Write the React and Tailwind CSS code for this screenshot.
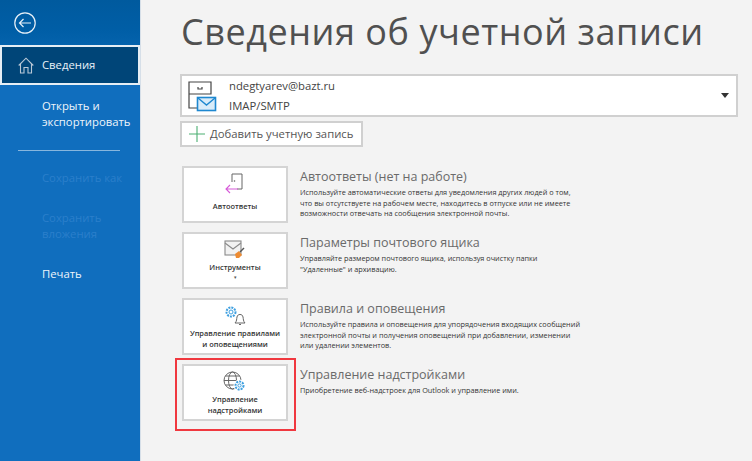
function Card({ label, children, title, desc, boxed, chevron, low }) {
  const card = (
    <div className="w-[106px] h-[57px] shrink-0 bg-white border-2 border-[#d4d4d4] flex flex-col items-center pt-[4px]">
      <div className="h-[24px] flex items-center justify-center shrink-0">{children}</div>
      <div className={`text-[7.4px] leading-[11px] font-semibold text-[#333] text-center whitespace-nowrap ${low ? "mt-[5px]" : ""}`}>{label}</div>
      {chevron && <div className="text-[5px] leading-[8px] text-[#555]">▾</div>}
    </div>
  );
  return (
    <div className="flex h-[66px]">
      <div className="w-[118px] shrink-0 flex justify-start">
        {boxed ? (
          <div className="-ml-[7px] -mt-[6px] h-[73px] w-[121px] border-2 border-[#f0383f] pl-[5px] pt-[4px] relative z-10 shrink-0">{card}</div>
        ) : card}
      </div>
      <div className="pt-[2px]">
        <div className="text-[12.5px] leading-[18px] text-[#6a6a6a] whitespace-nowrap">{title}</div>
        <div className="text-[7.3px] leading-[10.5px] text-[#333] mt-[1px] whitespace-pre-line">{desc}</div>
      </div>
    </div>
  );
}

export default function App() {
  return (
    <div className="w-[752px] h-[461px] flex overflow-hidden bg-[#f3f3f3]" style={{ fontFamily: '"Open Sans","Noto Sans",sans-serif' }}>
      <aside className="w-[140px] shrink-0 h-full border-r border-[#d6dfe8] bg-[linear-gradient(180deg,#005a9e_0px,#005ea6_30px,#106ebe_85px,#106ebe_100%)] flex flex-col box-content">
        <div className="h-[45px] pl-[14px] pt-[12px]">
          <svg width="22" height="22" viewBox="0 0 22 22" fill="none" stroke="#e8f1f8" strokeWidth="1.2">
            <circle cx="11" cy="11" r="10.2" />
            <path d="M5.5 11H17M9.5 7L5.5 11L9.5 15" />
          </svg>
        </div>
        <div className="h-[40px] w-[140px] bg-[#004578] border-2 border-[#e6eef5] flex items-center pl-[16px] text-[11.3px] text-[#e8f1f8]">
          <svg width="16" height="17" viewBox="0 0 16 17" fill="none" stroke="#b9c8d6" strokeWidth="1.1" className="mr-[8px] mt-[1px]">
            <path d="M0.7 8.5L8 1.2L15.3 8.5M2.5 7V16H6V10.5H10V16H13.5V7" />
          </svg>
          <span className="mt-[1px]">Сведения</span>
        </div>
        <div className="pl-[42px] pt-[13px] text-[11.3px] leading-[16px] text-[#eef5fb] h-[65px]">Открыть и<br />экспортировать</div>
        <div className="ml-[18px] w-[102px] h-[1px] bg-[#87b6de]"></div>
        <div className="pl-[42px] pt-[19px] text-[11.3px] leading-[16px] text-[#2b7fcb]">Сохранить как</div>
        <div className="pl-[42px] pt-[24px] text-[11.3px] leading-[16px] text-[#2b7fcb]">Сохранить<br />вложения</div>
        <div className="pl-[42px] pt-[24px] text-[11.3px] leading-[16px] text-[#eef5fb]">Печать</div>
      </aside>
      <main className="flex-1 pl-[39px] pr-[13px] pt-[7px] min-w-0">
        <h1 className="ml-[1px] text-[36px] leading-[50px] text-[#505050] tracking-[0.55px] whitespace-nowrap">Сведения об учетной записи</h1>
        <div className="mt-[17px] h-[43px] w-[558px] bg-white border-2 border-[#d0d0d0] flex items-center relative">
          <svg width="30" height="32" viewBox="0 0 30 32" fill="none" className="ml-[6px] mt-[2px] shrink-0">
            <path d="M1 1H23V13H1V1ZM1 13V27H9" stroke="#444" strokeWidth="1.2" />
            <path d="M10 6V8H14V6" stroke="#444" strokeWidth="1.2" />
            <rect x="9.5" y="16.5" width="18" height="13" fill="#d9ecf9" stroke="#1e88d0" strokeWidth="1.6" />
            <path d="M10 17L18.5 24L27 17" stroke="#1e88d0" strokeWidth="1.4" />
          </svg>
          <div className="ml-[11px] text-[11.3px] leading-[20px] text-[#444]">
            <div>ndegtyarev@bazt.ru</div>
            <div>IMAP/SMTP</div>
          </div>
          <svg width="8" height="5" viewBox="0 0 8 5" className="absolute right-[7px] top-[17px]"><path d="M0 0H8L4 5Z" fill="#333" /></svg>
        </div>
        <div className="mt-[4px] h-[26px] w-[183px] bg-white border-2 border-[#d0d0d0] flex items-center pl-[7px] text-[11.3px] text-[#555]">
          <svg width="16" height="16" viewBox="0 0 16 16" stroke="#4caf73" strokeWidth="1.1" className="mr-[5px]"><path d="M8 0V16M0 8H16" /></svg>
          Добавить учетную запись
        </div>
        <div className="mt-[19px] ml-[2px]">
          <Card
            low
            label="Автоответы"
            title="Автоответы (нет на работе)"
            desc={"Используйте автоматические ответы для уведомления других людей о том,\nчто вы отсутствуете на рабочем месте, находитесь в отпуске или не имеете\nвозможности отвечать на сообщения электронной почты."}
          >
            <svg width="20" height="22" viewBox="0 0 20 22" fill="none">
              <path d="M7 1H17V16H12M7 1V9" stroke="#666" strokeWidth="1" />
              <circle cx="9.5" cy="8" r="0.8" fill="#666" />
              <path d="M1 16H13M5 12L1 16L5 20" stroke="#d65ad8" strokeWidth="1.1" />
            </svg>
          </Card>
          <Card
            label="Инструменты"
            chevron
            title="Параметры почтового ящика"
            desc={"Управляйте размером почтового ящика, используя очистку папки\n\"Удаленные\" и архивацию."}
          >
            <svg width="22" height="20" viewBox="0 0 22 20" fill="none">
              <rect x="1" y="1" width="16" height="14" stroke="#8a8a8a" strokeWidth="1.1" fill="#f2f2f2" />
              <path d="M1 3L9 9L17 3" stroke="#8a8a8a" strokeWidth="1.1" />
              <path d="M11 14L15 11L18 15L15 18H12Z" fill="#ed8b32" />
              <path d="M16 12L20 8" stroke="#555" strokeWidth="1.5" />
            </svg>
          </Card>
          <Card
            label={<>Управление правилами<br />и оповещениями</>}
            title="Правила и оповещения"
            desc={"Используйте правила и оповещения для упорядочения входящих сообщений\nэлектронной почты и получения оповещений при добавлении, изменении\nили удалении элементов."}
          >
            <svg width="22" height="22" viewBox="0 0 22 22" fill="none">
              <circle cx="7" cy="7" r="4.5" stroke="#3fa0e0" strokeWidth="2" strokeDasharray="2 1" />
              <circle cx="7" cy="7" r="2" stroke="#3fa0e0" strokeWidth="1" />
              <path d="M11 18H21C19 16 19.5 14 19 12C18.5 10 17.5 9.5 16 9.5C14.5 9.5 13.5 10 13 12C12.5 14 13 16 11 18Z" stroke="#666" strokeWidth="1" fill="#fff" />
              <path d="M15 19.5H17" stroke="#666" strokeWidth="1" />
            </svg>
          </Card>
          <Card
            boxed
            label={<>Управление<br />надстройками</>}
            title="Управление надстройками"
            desc="Приобретение веб-надстроек для Outlook и управление ими."
          >
            <svg width="24" height="22" viewBox="0 0 24 22" fill="none">
              <circle cx="9.5" cy="9.5" r="8.5" stroke="#666" strokeWidth="1" />
              <ellipse cx="9.5" cy="9.5" rx="4" ry="8.5" stroke="#666" strokeWidth="1" />
              <path d="M1 9.5H18M2.5 5H16.5M2.5 14H16.5" stroke="#666" strokeWidth="1" />
              <circle cx="16.5" cy="14.5" r="6" fill="#fff" />
              <circle cx="16.5" cy="14.5" r="4" stroke="#3fa0e0" strokeWidth="2" strokeDasharray="2 1" />
              <circle cx="16.5" cy="14.5" r="1.6" stroke="#3fa0e0" strokeWidth="1" />
            </svg>
          </Card>
        </div>
      </main>
    </div>
  );
}
